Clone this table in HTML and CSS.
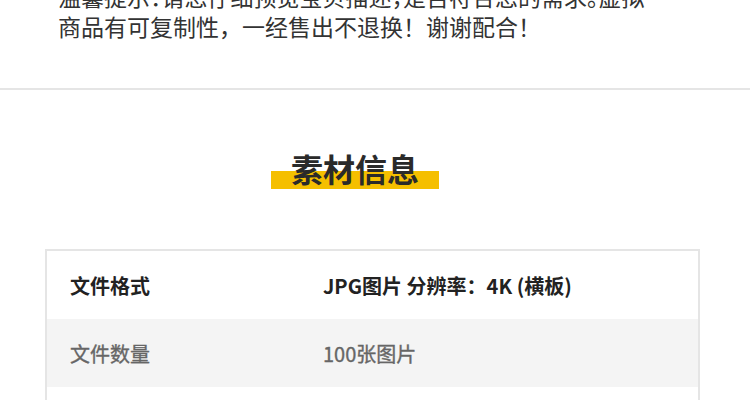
FILE: index.html
```html
<!DOCTYPE html>
<html lang="zh-CN">
<head>
  <meta charset="UTF-8">
  <title>素材信息</title>
  <meta name="viewport" content="width=device-width, initial-scale=1.0">
  <link rel="stylesheet" href="styles.css">
</head>
<body>
  <div class="notice">
    <p><span class="first">温馨提示：请您仔细预览宝贝描述，是否符合您的需求。虚拟</span><br>商品有可复制性，一经售出不退换！谢谢配合！</p>
  </div>
  <div class="divider"></div>
  <div class="info">
    <div class="title-wrap">
      <h2 class="title">素材信息</h2>
    </div>
    <div class="table">
      <div class="row">
        <div class="label">文件格式</div>
        <div class="value">JPG图片 分辨率：4K (横板)</div>
      </div>
      <div class="row alt">
        <div class="label">文件数量</div>
        <div class="value">100张图片</div>
      </div>
      <div class="row">
        <div class="label"></div>
        <div class="value"></div>
      </div>
    </div>
  </div>
</body>
</html>
```

FILE: styles.css
```css
body {
  margin: 0;
  background: #fff;
  font-family: "Noto Sans CJK SC", "Noto Sans", sans-serif;
  color: #333;
  overflow: hidden;
}
.notice {
  padding: 0 40px 47px 58px;
}
.notice p {
  margin: -19px 0 0;
  font-size: 23px;
  line-height: 30px;
  white-space: nowrap;
}
.notice .first {
  font-feature-settings: "halt";
}
.divider {
  height: 2px;
  background: #e5e5e5;
}
.info {
  padding-top: 62px;
}
.title-wrap {
  display: flex;
  justify-content: center;
  padding-right: 40px;
}
.title {
  margin: 0;
  padding: 0 20px 5px;
  font-size: 32px;
  line-height: 32px;
  font-weight: bold;
  color: #2a2a2a;
  background: linear-gradient(#f5bf00, #f5bf00) bottom / 100% 18px no-repeat;
}
.table {
  margin: 60px 50px 0 45px;
  border: 2px solid #e5e5e5;
}
.row {
  display: grid;
  grid-template-columns: 253px 1fr;
  align-items: center;
  height: 68px;
  padding-left: 23px;
  font-size: 20px;
  font-weight: bold;
  color: #222;
}
.row.alt {
  background: #f4f4f4;
  color: #666;
  font-weight: normal;
  -webkit-text-stroke: 0.35px #666;
}
```
